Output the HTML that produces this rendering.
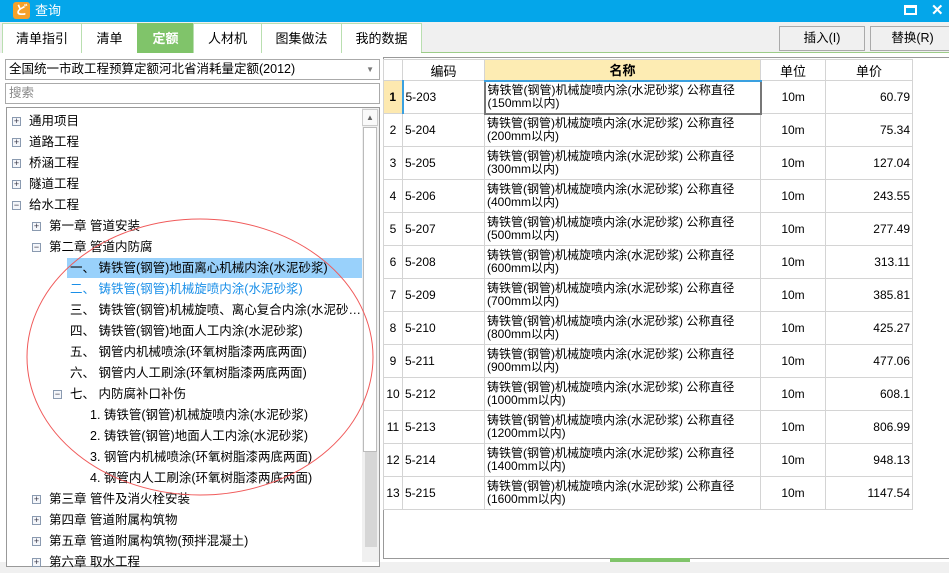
<!DOCTYPE html>
<html><head><meta charset="utf-8"><style>
*{margin:0;padding:0;box-sizing:border-box}
body{width:949px;height:562px;overflow:hidden;background:#f0f0f0;font-family:"Liberation Sans","Noto Sans CJK SC",sans-serif;font-size:12px;color:#000;position:relative}
.a{position:absolute}
.tab{position:absolute;top:23px;height:30px;border:1px solid #b9dfb0;border-bottom:none;background:#fff;font-size:13px;text-align:center;line-height:29px}
.tree{position:absolute;left:0;top:2px}
.tree div{position:absolute;height:21px;line-height:21px;font-size:12.5px;white-space:nowrap}
.pm{position:absolute;width:9px;height:9px;border:1px solid #8a9ab0;background:#f4f6fa;font-size:9px;line-height:7px;text-align:center;color:#334}
table{border-collapse:collapse;position:absolute;left:383px;top:59px;background:#fff}
td{border:1px solid #d4d4d4;height:33px;font-size:12px;line-height:13px;vertical-align:middle;padding:0 2px}
th{border:1px solid #d4d4d4;height:21px;font-weight:normal;font-size:13px}
</style></head><body>
<div class="a" style="left:0;top:0;width:949px;height:22px;background:#04a6ea"></div>
<div class="a" style="left:13px;top:2px;width:17px;height:17px;background:#f4a12a;border-radius:3px;color:#fff;font-size:12px;line-height:17px;text-align:center;font-weight:bold">ど</div>
<div class="a" style="left:35px;top:2px;color:#fff;font-size:13px;line-height:18px">查询</div>
<div class="a" style="left:904px;top:5px;width:13px;height:10px;border:2px solid #fff;border-top-width:3px"></div>
<div class="a" style="left:931px;top:1px;color:#fff;font-size:15px;font-weight:bold">✕</div>
<div class="tab" style="left:2px;width:80px">清单指引</div>
<div class="tab" style="left:81px;width:57px">清单</div>
<div class="tab" style="left:137px;width:57px;background:#80c46a;color:#fff;font-weight:bold;border-color:#80c46a">定额</div>
<div class="tab" style="left:193px;width:69px">人材机</div>
<div class="tab" style="left:261px;width:81px">图集做法</div>
<div class="tab" style="left:341px;width:81px">我的数据</div>
<div class="a" style="left:421px;top:52px;width:528px;height:1px;background:#9ccc88"></div>
<div class="a" style="left:779px;top:26px;width:86px;height:25px;border:1px solid #aaa;background:#f0f0f0;text-align:center;line-height:23px;font-size:12.5px">插入(I)</div>
<div class="a" style="left:870px;top:26px;width:85px;height:25px;border:1px solid #aaa;background:#f0f0f0;text-align:center;line-height:23px;font-size:12.5px">替换(R)</div>
<div class="a" style="left:0;top:53px;width:949px;height:509px;background:#fff"></div>
<div class="a" style="left:5px;top:59px;width:375px;height:21px;border:1px solid #aaa;background:#fff;line-height:19px;padding-left:3px;font-size:12.5px">全国统一市政工程预算定额河北省消耗量定额(2012)<span style="position:absolute;right:5px;color:#777;font-size:8px">▼</span></div>
<div class="a" style="left:5px;top:83px;width:375px;height:21px;border:1px solid #aaa;background:#fff;line-height:19px;padding-left:3px;color:#888;font-size:12.5px">搜索</div>
<div class="a" style="left:6px;top:107px;width:374px;height:460px;border:1px solid #999;background:#fff"></div>
<div class="a" style="left:362px;top:108px;width:17px;height:454px;background:#f0f0f0"></div>
<div class="a" style="left:362px;top:109px;width:16px;height:17px;border:1px solid #ccc;background:#fafafa;text-align:center;font-size:8px;color:#666;line-height:15px">▲</div>
<div class="a" style="left:363px;top:127px;width:14px;height:325px;background:#fff;border:1px solid #bbb"></div>
<div class="a" style="left:365px;top:452px;width:12px;height:95px;background:#d6d6d6"></div>
<div class="a" style="left:67px;top:258px;width:295px;height:20px;background:#99d1fb"></div>
<div class="tree">
<span class="pm" style="left:12px;top:115px">+</span><div style="left:29px;top:109px">通用项目</div>
<span class="pm" style="left:12px;top:136px">+</span><div style="left:29px;top:130px">道路工程</div>
<span class="pm" style="left:12px;top:157px">+</span><div style="left:29px;top:151px">桥涵工程</div>
<span class="pm" style="left:12px;top:178px">+</span><div style="left:29px;top:172px">隧道工程</div>
<span class="pm" style="left:12px;top:199px">−</span><div style="left:29px;top:193px">给水工程</div>
<span class="pm" style="left:32px;top:220px">+</span><div style="left:49px;top:214px">第一章 管道安装</div>
<span class="pm" style="left:32px;top:241px">−</span><div style="left:49px;top:235px">第二章 管道内防腐</div>
<div style="left:70px;top:256px">一、 铸铁管(钢管)地面离心机械内涂(水泥砂浆)</div>
<div style="left:70px;top:277px;color:#1a8fe8">二、 铸铁管(钢管)机械旋喷内涂(水泥砂浆)</div>
<div style="left:70px;top:298px">三、 铸铁管(钢管)机械旋喷、离心复合内涂(水泥砂…</div>
<div style="left:70px;top:319px">四、 铸铁管(钢管)地面人工内涂(水泥砂浆)</div>
<div style="left:70px;top:340px">五、 钢管内机械喷涂(环氧树脂漆两底两面)</div>
<div style="left:70px;top:361px">六、 钢管内人工刷涂(环氧树脂漆两底两面)</div>
<span class="pm" style="left:53px;top:388px">−</span><div style="left:70px;top:382px">七、 内防腐补口补伤</div>
<div style="left:90px;top:403px">1. 铸铁管(钢管)机械旋喷内涂(水泥砂浆)</div>
<div style="left:90px;top:424px">2. 铸铁管(钢管)地面人工内涂(水泥砂浆)</div>
<div style="left:90px;top:445px">3. 钢管内机械喷涂(环氧树脂漆两底两面)</div>
<div style="left:90px;top:466px">4. 钢管内人工刷涂(环氧树脂漆两底两面)</div>
<span class="pm" style="left:32px;top:493px">+</span><div style="left:49px;top:487px">第三章 管件及消火栓安装</div>
<span class="pm" style="left:32px;top:514px">+</span><div style="left:49px;top:508px">第四章 管道附属构筑物</div>
<span class="pm" style="left:32px;top:535px">+</span><div style="left:49px;top:529px">第五章 管道附属构筑物(预拌混凝土)</div>
<span class="pm" style="left:32px;top:556px">+</span><div style="left:49px;top:550px">第六章 取水工程</div>
</div>
<svg class="a" style="left:0;top:0" width="949" height="562"><ellipse cx="200" cy="357" rx="173" ry="138" fill="none" stroke="#f05a5a" stroke-width="1"/></svg>
<div class="a" style="left:383px;top:57px;width:566px;height:502px;border:1px solid #999;border-right:none;background:#fff"></div>
<table>
<tr><th style="width:19px"></th><th style="width:82px">编码</th><th style="width:276px;background:#fdecb3;font-weight:bold;border-bottom:2px solid #3aa0e0">名称</th><th style="width:65px">单位</th><th style="width:87px">单价</th></tr>
<tr><td style="background:#fde9b0;font-weight:bold;text-align:center;border-right:2px solid #3aa0e0">1</td><td>5-203</td><td style="border:2px solid #777">铸铁管(钢管)机械旋喷内涂(水泥砂浆) 公称直径<br>(150mm以内)</td><td style="text-align:center">10m</td><td style="text-align:right">60.79</td></tr>
<tr><td style="text-align:center">2</td><td>5-204</td><td>铸铁管(钢管)机械旋喷内涂(水泥砂浆) 公称直径<br>(200mm以内)</td><td style="text-align:center">10m</td><td style="text-align:right">75.34</td></tr>
<tr><td style="text-align:center">3</td><td>5-205</td><td>铸铁管(钢管)机械旋喷内涂(水泥砂浆) 公称直径<br>(300mm以内)</td><td style="text-align:center">10m</td><td style="text-align:right">127.04</td></tr>
<tr><td style="text-align:center">4</td><td>5-206</td><td>铸铁管(钢管)机械旋喷内涂(水泥砂浆) 公称直径<br>(400mm以内)</td><td style="text-align:center">10m</td><td style="text-align:right">243.55</td></tr>
<tr><td style="text-align:center">5</td><td>5-207</td><td>铸铁管(钢管)机械旋喷内涂(水泥砂浆) 公称直径<br>(500mm以内)</td><td style="text-align:center">10m</td><td style="text-align:right">277.49</td></tr>
<tr><td style="text-align:center">6</td><td>5-208</td><td>铸铁管(钢管)机械旋喷内涂(水泥砂浆) 公称直径<br>(600mm以内)</td><td style="text-align:center">10m</td><td style="text-align:right">313.11</td></tr>
<tr><td style="text-align:center">7</td><td>5-209</td><td>铸铁管(钢管)机械旋喷内涂(水泥砂浆) 公称直径<br>(700mm以内)</td><td style="text-align:center">10m</td><td style="text-align:right">385.81</td></tr>
<tr><td style="text-align:center">8</td><td>5-210</td><td>铸铁管(钢管)机械旋喷内涂(水泥砂浆) 公称直径<br>(800mm以内)</td><td style="text-align:center">10m</td><td style="text-align:right">425.27</td></tr>
<tr><td style="text-align:center">9</td><td>5-211</td><td>铸铁管(钢管)机械旋喷内涂(水泥砂浆) 公称直径<br>(900mm以内)</td><td style="text-align:center">10m</td><td style="text-align:right">477.06</td></tr>
<tr><td style="text-align:center">10</td><td>5-212</td><td>铸铁管(钢管)机械旋喷内涂(水泥砂浆) 公称直径<br>(1000mm以内)</td><td style="text-align:center">10m</td><td style="text-align:right">608.1</td></tr>
<tr><td style="text-align:center">11</td><td>5-213</td><td>铸铁管(钢管)机械旋喷内涂(水泥砂浆) 公称直径<br>(1200mm以内)</td><td style="text-align:center">10m</td><td style="text-align:right">806.99</td></tr>
<tr><td style="text-align:center">12</td><td>5-214</td><td>铸铁管(钢管)机械旋喷内涂(水泥砂浆) 公称直径<br>(1400mm以内)</td><td style="text-align:center">10m</td><td style="text-align:right">948.13</td></tr>
<tr><td style="text-align:center">13</td><td>5-215</td><td>铸铁管(钢管)机械旋喷内涂(水泥砂浆) 公称直径<br>(1600mm以内)</td><td style="text-align:center">10m</td><td style="text-align:right">1147.54</td></tr>
</table>
<div class="a" style="left:610px;top:558px;width:80px;height:4px;background:#80c46a"></div>
</body></html>
